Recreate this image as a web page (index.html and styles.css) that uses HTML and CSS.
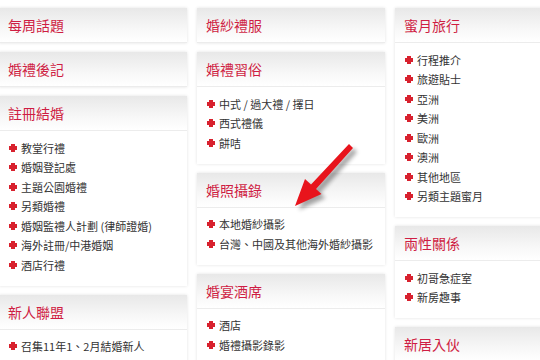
FILE: index.html
```html
<!DOCTYPE html>
<html lang="zh-Hant">
<head>
<meta charset="utf-8">
<link rel="stylesheet" href="styles.css">
</head>
<body>
<div class="page">
  <div class="col">
    <div class="card"><div class="head">每周話題</div></div>
    <div class="card"><div class="head">婚禮後記</div></div>
    <div class="card">
      <div class="head">註冊結婚</div>
      <ul class="list">
        <li>教堂行禮</li>
        <li>婚姻登記處</li>
        <li>主題公園婚禮</li>
        <li>另類婚禮</li>
        <li>婚姻監禮人計劃 (律師證婚)</li>
        <li>海外註冊/中港婚姻</li>
        <li>酒店行禮</li>
      </ul>
    </div>
    <div class="card">
      <div class="head">新人聯盟</div>
      <ul class="list">
        <li>召集11年1、2月結婚新人</li>
      </ul>
    </div>
  </div>
  <div class="col">
    <div class="card"><div class="head">婚紗禮服</div></div>
    <div class="card">
      <div class="head">婚禮習俗</div>
      <ul class="list">
        <li>中式 / 過大禮 / 擇日</li>
        <li>西式禮儀</li>
        <li>餅咭</li>
      </ul>
    </div>
    <div class="card">
      <div class="head">婚照攝錄</div>
      <ul class="list">
        <li>本地婚紗攝影</li>
        <li>台灣、中國及其他海外婚紗攝影</li>
      </ul>
    </div>
    <div class="card">
      <div class="head">婚宴酒席</div>
      <ul class="list">
        <li>酒店</li>
        <li>婚禮攝影錄影</li>
      </ul>
    </div>
  </div>
  <div class="col">
    <div class="card">
      <div class="head">蜜月旅行</div>
      <ul class="list">
        <li>行程推介</li>
        <li>旅遊貼士</li>
        <li>亞洲</li>
        <li>美洲</li>
        <li>歐洲</li>
        <li>澳洲</li>
        <li>其他地區</li>
        <li>另類主題蜜月</li>
      </ul>
    </div>
    <div class="card">
      <div class="head">兩性關係</div>
      <ul class="list">
        <li>初哥急症室</li>
        <li>新房趣事</li>
      </ul>
    </div>
    <div class="card">
      <div class="head">新居入伙</div>
    </div>
  </div>
  <svg class="arrow" width="90" height="90" viewBox="0 0 90 90">
    <defs>
      <filter id="sh" x="-30%" y="-30%" width="160%" height="160%">
        <feGaussianBlur stdDeviation="2"/>
      </filter>
    </defs>
    <g transform="translate(4,4)" fill="#000" opacity="0.35" filter="url(#sh)">
      <path d="M64 5 L68 9 L31 50 L36.5 55 L10 67 L20 40 L26 45.5 Z"/>
    </g>
    <path d="M64 5 L68 9 L31 50 L36.5 55 L10 67 L20 40 L26 45.5 Z" fill="#e8141c"/>
  </svg>
</div>
</body>
</html>
```
FILE: styles.css
```css
html, body {
  margin: 0;
  padding: 0;
  background: #ffffff;
}
body {
  font-family: "Noto Sans CJK TC", "Noto Sans", sans-serif;
  overflow: hidden;
  width: 540px;
  height: 360px;
}
.page {
  position: relative;
  display: grid;
  grid-template-columns: 188px 188px 150px;
  column-gap: 10px;
  margin-left: -1px;
  padding-top: 8px;
  align-items: start;
  height: 352px;
  overflow: hidden;
}
.col {
  display: flex;
  flex-direction: column;
  gap: 9px;
}
.card {
  background: #ffffff;
  box-shadow: 0 0 3px rgba(0, 0, 0, 0.12);
}
.head {
  height: 35px;
  line-height: 35px;
  padding-left: 9px;
  font-size: 14px;
  color: #cf1d43;
  background: linear-gradient(#e8e8e8, #f7f7f7 60%, #ffffff);
  border-bottom: 1px solid #ececec;
  box-sizing: border-box;
}
.list {
  list-style: none;
  margin: 0;
  padding: 7px 0 11px 10px;
}
.list li {
  display: flex;
  align-items: center;
  gap: 4px;
  height: 19.5px;
  font-size: 11px;
  color: #333333;
  white-space: nowrap;
}
.list li::before {
  content: "";
  flex: none;
  width: 8px;
  height: 8px;
  background:
    linear-gradient(#d8212e, #d8212e) center / 4px 8px no-repeat,
    linear-gradient(#d8212e, #d8212e) center / 8px 4px no-repeat;
}
.arrow {
  position: absolute;
  left: 286px;
  top: 139px;
}
```
